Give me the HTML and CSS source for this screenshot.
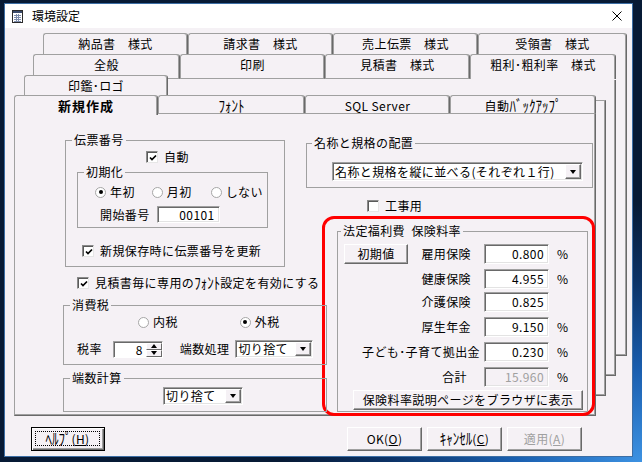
FILE: index.html
```html
<!DOCTYPE html>
<html lang="ja">
<head>
<meta charset="utf-8">
<title>環境設定</title>
<link rel="stylesheet" href="styles.css">
</head>
<body>
<div class="win">
  <div class="titlebar">
    <svg class="appicon" width="11" height="13" viewBox="0 0 11 13">
      <rect x="0.5" y="0.5" width="10" height="12" fill="#fff" stroke="#2b2b2b"/>
      <rect x="1" y="1" width="9" height="2" fill="#3a4a6b"/>
      <path d="M2 5.5h7M2 7.5h7M2 9.5h7M2 11.5h7M4.5 4v8M6.5 4v8" stroke="#7d8cab" stroke-width="1"/>
    </svg>
    <span class="title">環境設定</span>
    <svg class="close" width="10" height="10" viewBox="0 0 10 10"><path d="M0.5 0.5L9.5 9.5M9.5 0.5L0.5 9.5" stroke="#000" stroke-width="1"/></svg>
  </div>
  <div class="body">
    <div class="tabctl">
      <div class="back b1"></div>
      <div class="tabrow r1">
        <div class="tab t145">納品書　様式</div>
        <div class="tab t145">請求書　様式</div>
        <div class="tab t145">売上伝票　様式</div>
        <div class="tab t149">受領書　様式</div>
      </div>
      <div class="back b2"></div>
      <div class="tabrow r2">
        <div class="tab t147">全般</div>
        <div class="tab t145">印刷</div>
        <div class="tab t145">見積書　様式</div>
        <div class="tab t146 open">粗利･粗利率　様式</div>
      </div>
      <div class="back b3"></div>
      <div class="tabrow r3">
        <div class="tab t144">印鑑･ロゴ</div>
      </div>
      <div class="tabrow r4">
        <div class="tab t144 sel">新規作成</div>
        <div class="tab t147"><span class="hk">ﾌｫﾝﾄ</span></div>
        <div class="tab t145">SQL Server</div>
        <div class="tab t146">自動<span class="hk">ﾊﾞｯｸｱｯﾌﾟ</span></div>
      </div>
      <div class="panel">
        <div class="lcol">
          <div class="grp g-denpyo">
            <span class="cap">伝票番号</span>
            <div class="chk c-auto"><span class="cb"><svg width="8" height="8" viewBox="0 0 8 8"><path d="M1 3.5L3 5.5L7 1.5" fill="none" stroke="#000" stroke-width="1.7"/></svg></span>自動</div>
            <div class="grp g-init">
              <span class="cap">初期化</span>
              <div class="radios r-init">
                <div class="rad"><span class="rb on"></span>年初</div>
                <div class="rad"><span class="rb"></span>月初</div>
                <div class="rad"><span class="rb"></span>しない</div>
              </div>
              <div class="startno"><span>開始番号</span><div class="tb num start">00101</div></div>
            </div>
            <div class="chk c-save"><span class="cb"><svg width="8" height="8" viewBox="0 0 8 8"><path d="M1 3.5L3 5.5L7 1.5" fill="none" stroke="#000" stroke-width="1.7"/></svg></span>新規保存時に伝票番号を更新</div>
          </div>
          <div class="chk c-mitsu"><span class="cb"><svg width="8" height="8" viewBox="0 0 8 8"><path d="M1 3.5L3 5.5L7 1.5" fill="none" stroke="#000" stroke-width="1.7"/></svg></span>見積書毎に専用の<span class="hk">ﾌｫﾝﾄ</span>設定を有効にする</div>
          <div class="grp g-tax">
            <span class="cap">消費税</span>
            <div class="radios r-tax">
              <div class="rad"><span class="rb"></span>内税</div>
              <div class="rad"><span class="rb on"></span>外税</div>
            </div>
            <div class="taxrow">
              <span>税率</span>
              <div class="spin"><span class="val">8</span><span class="sbtns"><span class="sb"><i class="up"></i></span><span class="sb"><i class="dn"></i></span></span></div>
              <span class="hasu">端数処理</span>
              <div class="cmb c-hasu"><span class="val">切り捨て</span><span class="arr"><i class="dn"></i></span></div>
            </div>
          </div>
          <div class="grp g-round">
            <span class="cap">端数計算</span>
            <div class="cmb c-round"><span class="val">切り捨て</span><span class="arr"><i class="dn"></i></span></div>
          </div>
        </div>
        <div class="rcol">
          <div class="grp g-layout">
            <span class="cap">名称と規格の配置</span>
            <div class="cmb c-layout"><span class="val">名称と規格を縦に並べる(それぞれ１行)</span><span class="arr"><i class="dn"></i></span></div>
          </div>
          <div class="chk c-kouji"><span class="cb"></span>工事用</div>
          <div class="redbox">
            <div class="grp g-ins">
              <span class="cap">法定福利費&#8194;保険料率</span>
              <div class="irow"><div class="btn b-init">初期値</div><span class="lbl after">雇用保険</span><div class="tb num">0.800</div><span class="pct">%</span></div>
              <div class="irow"><span class="lbl">健康保険</span><div class="tb num">4.955</div><span class="pct">%</span></div>
              <div class="irow tight"><span class="lbl">介護保険</span><div class="tb num">0.825</div></div>
              <div class="irow"><span class="lbl">厚生年金</span><div class="tb num">9.150</div><span class="pct">%</span></div>
              <div class="irow"><span class="lbl long">子ども･子育て拠出金</span><div class="tb num">0.230</div><span class="pct">%</span></div>
              <div class="irow"><span class="lbl total">合計</span><div class="tb num dis">15.960</div><span class="pct">%</span></div>
              <div class="btn b-page">保険料率説明ページをブラウザに表示</div>
            </div>
          </div>
        </div>
      </div>
    </div>
    <div class="btnbar">
      <div class="btn help"><span class="focus"><span class="hk">ﾍﾙﾌﾟ</span>(<u>H</u>)</span></div>
      <div class="btn ok">OK(<u>O</u>)</div>
      <div class="btn next"><span class="hk">ｷｬﾝｾﾙ</span>(<u>C</u>)</div>
      <div class="btn next dis">適用(<u>A</u>)</div>
    </div>
  </div>
</div>
</body>
</html>
```

FILE: styles.css
```css
* { box-sizing: border-box; }
html, body { margin: 0; }
body {
  width: 642px;
  height: 462px;
  overflow: hidden;
  padding: 3px 0 0 4px;
  background: radial-gradient(ellipse 360px 260px at 100% 100%, #3d92e2 0%, #1a5fb0 35%, #0c3266 70%, #071a35 100%), #071a35;
  font-family: "Noto Sans CJK JP", "Noto Sans", sans-serif;
  font-size: 12px;
  line-height: 14px;
  letter-spacing: 0.4px;
  color: #000;
}

/* half-width katakana drawn taller, like the bitmap UI font */
.hk {
  display: inline-block;
  font-size: 13px;
  line-height: 14px;
  letter-spacing: 0;
  transform: scaleY(1.25);
}

.win {
  width: 629px;
  height: 454px;
  border: 1px solid #3c6ea5;
  background: #f5f1f5;
}

.titlebar {
  height: 24px;
  background: #fff;
  display: flex;
  align-items: center;
  padding-left: 7px;
}
.appicon { flex: none; }
.title { margin-left: 9px; letter-spacing: 0; }
.close { margin-left: auto; margin-right: 10px; }

.body { padding: 5px 0 0 9px; }

/* ---------- stacked tab control ---------- */
.tabctl {
  position: relative;
  width: 613px;
  padding-top: 80px;
}
.back {
  position: absolute;
  background: #f5f1f5;
  border-right: 1px solid #696969;
  border-bottom: 1px solid #696969;
  box-shadow: inset -1px -1px #a0a0a0;
}
.b1 { left: 29px; top: 21px; width: 584px; height: 302px; z-index: 1; }
.b2 { left: 19px; top: 47px; width: 583px; height: 296px; z-index: 3; }
.b3 { left: 10px; top: 67px; width: 582px; height: 296px; z-index: 5; border-top: 1px solid #a0a0a0; }

.tabrow { position: absolute; display: flex; }
.r1 { left: 29px; top: 0; z-index: 2; }
.r2 { left: 19px; top: 21px; z-index: 4; }
.r3 { left: 10px; top: 42px; z-index: 6; }
.r4 { left: 0; top: 62px; z-index: 8; }

.tab {
  flex: none;
  height: 21px;
  display: flex;
  align-items: center;
  justify-content: center;
  white-space: nowrap;
  background: #f5f1f5;
  border-top: 1px solid #a0a0a0;
  border-left: 1px solid #a0a0a0;
  border-right: 1px solid #696969;
  box-shadow: inset -1px 0 #a0a0a0;
  border-radius: 3px 3px 0 0;
}
.t144 { width: 144px; }
.t145 { width: 145px; }
.t146 { width: 146px; }
.t147 { width: 147px; }
.t149 { width: 149px; }
.r2 .tab { height: 25px; border-bottom: 1px solid #a0a0a0; padding-bottom: 4px; }
.r2 .tab.open { border-bottom: none; padding-bottom: 5px; }
.r3 .tab { height: 20px; }
.r4 .tab { height: 18px; padding-top: 2px; }
.r4 .tab.sel {
  height: 20px;
  padding-top: 0;
  font-weight: bold;
  font-size: 13px;
  letter-spacing: 1px;
}

.panel {
  position: relative;
  z-index: 7;
  width: 582px;
  height: 303px;
  background: #f5f1f5;
  border-top: 1px solid #a0a0a0;
  border-left: 1px solid #a0a0a0;
  border-right: 1px solid #696969;
  border-bottom: 1px solid #696969;
  box-shadow: inset -1px -1px #a0a0a0;
  display: flex;
  padding-left: 48px;
}

/* ---------- common controls ---------- */
.grp {
  position: relative;
  flex: none;
  border: 1px solid #a0a0a0;
}
.cap {
  position: absolute;
  top: -8px;
  left: 6px;
  padding: 0 2px;
  background: #f5f1f5;
  white-space: nowrap;
}
.chk {
  display: flex;
  align-items: center;
  height: 14px;
  white-space: nowrap;
  flex: none;
}
.cb {
  flex: none;
  width: 12px;
  height: 12px;
  margin-right: 6px;
  background: #fff;
  border: 1px solid;
  border-color: #8a8a8a #e6e6e6 #e6e6e6 #8a8a8a;
  box-shadow: inset 1px 1px #5a5a5a;
  display: flex;
  align-items: center;
  justify-content: center;
  padding: 1px 0 0 1px;
}
.radios { display: flex; height: 14px; }
.rad { display: flex; align-items: center; white-space: nowrap; }
.rb {
  flex: none;
  width: 11px;
  height: 11px;
  margin-right: 4px;
  border-radius: 50%;
  border: 1px solid #a6a6a6;
  background: #fff;
  display: flex;
  align-items: center;
  justify-content: center;
}
.rb.on::after {
  content: "";
  width: 4px;
  height: 4px;
  border-radius: 50%;
  background: #000;
}
.tb {
  flex: none;
  background: #fff;
  border: 1px solid;
  border-color: #a0a0a0 #fff #fff #a0a0a0;
  box-shadow: inset 1px 1px #696969, inset -1px -1px #e3e3e3;
  display: flex;
  align-items: center;
}
.num { justify-content: flex-end; padding-right: 4px; }
.tb.dis { background: #f5f1f5; color: #a0a0a0; }

.btn {
  flex: none;
  display: flex;
  align-items: center;
  justify-content: center;
  white-space: nowrap;
  background: #f5f1f5;
  border: 1px solid;
  border-color: #fff #696969 #696969 #fff;
  box-shadow: inset -1px -1px #a0a0a0;
}
.btn.dis { color: #a0a0a0; }

.cmb {
  flex: none;
  display: flex;
  align-items: center;
  background: #fff;
  border: 1px solid;
  border-color: #a0a0a0 #fff #fff #a0a0a0;
  box-shadow: inset 1px 1px #696969, inset -1px -1px #e3e3e3;
  padding: 1px;
  white-space: nowrap;
}
.cmb .val { flex: 1; padding-left: 1px; }
.arr {
  flex: none;
  width: 16px;
  align-self: stretch;
  display: flex;
  align-items: center;
  justify-content: center;
  background: #f5f1f5;
  border: 1px solid;
  border-color: #fff #696969 #696969 #fff;
  box-shadow: inset -1px -1px #a0a0a0;
}
i.dn, i.up {
  display: block;
  width: 0;
  height: 0;
  border-left: 3.5px solid transparent;
  border-right: 3.5px solid transparent;
}
i.dn { border-top: 4px solid #000; }
i.up { border-bottom: 4px solid #000; }

/* ---------- left column ---------- */
.lcol {
  flex: none;
  width: 243px;
  display: flex;
  flex-direction: column;
  align-items: flex-start;
}
.g-denpyo {
  margin: 26px 0 0 2px;
  width: 220px;
  height: 127px;
  padding-top: 9px;
  display: flex;
  flex-direction: column;
  align-items: flex-start;
}
.c-auto { margin-left: 80px; }
.g-init {
  margin: 8px 0 0 11px;
  width: 191px;
  height: 56px;
  padding-top: 12px;
}
.r-init { margin-left: 17px; }
.r-init .rad + .rad { margin-left: 17px; }
.r-init .rad:last-child { margin-left: 19px; }
.startno {
  display: flex;
  align-items: center;
  margin: 7px 0 0 22px;
  height: 17px;
}
.start { margin-left: 7px; width: 63px; height: 17px; }
.c-save { margin: 16px 0 0 16px; }
.c-mitsu { margin: 9px 0 0 14px; }

.g-tax {
  margin-top: 15px;
  width: 264px;
  height: 60px;
  padding-top: 9px;
}
.r-tax { margin-left: 74px; }
.r-tax .rad + .rad { margin-left: 62px; }
.taxrow {
  display: flex;
  align-items: center;
  height: 18px;
  margin: 11px 0 0 13px;
  white-space: nowrap;
}
.spin {
  flex: none;
  margin-left: 11px;
  width: 50px;
  height: 17px;
  display: flex;
  background: #fff;
  border: 1px solid;
  border-color: #a0a0a0 #fff #fff #a0a0a0;
  box-shadow: inset 1px 1px #696969;
  padding: 1px 0 0 1px;
}
.spin .val { flex: 1; text-align: right; padding-right: 3px; line-height: 14px; }
.sbtns { width: 16px; display: flex; flex-direction: column; }
.sb {
  flex: 1;
  display: flex;
  align-items: center;
  justify-content: center;
  background: #f5f1f5;
  border: 1px solid;
  border-color: #fff #696969 #696969 #fff;
}
.hasu { margin-left: 17px; }
.c-hasu { margin-left: 6px; width: 78px; height: 18px; }
.g-round {
  margin-top: 13px;
  width: 264px;
  height: 34px;
  padding: 8px 0 0 99px;
}
.c-round { width: 80px; height: 18px; }

/* ---------- right column ---------- */
.rcol {
  flex: none;
  width: 287px;
  display: flex;
  flex-direction: column;
  align-items: flex-start;
}
.g-layout {
  margin-top: 29px;
  width: 287px;
  height: 45px;
  padding: 18px 0 0 25px;
}
.g-layout .cap { left: 5px; }
.c-layout { width: 251px; height: 19px; }
.c-kouji { margin: 11px 0 0 61px; }
.redbox {
  flex: none;
  margin: 3px 0 0 16px;
  width: 273px;
  height: 200px;
  border: 3px solid #f00;
  border-radius: 12px;
  padding: 12px 0 0 12px;
}
.g-ins {
  width: 251px;
  height: 181px;
  padding: 12px 0 0 6px;
  display: flex;
  flex-direction: column;
  align-items: flex-start;
}
.g-ins .cap { left: 3px; }
.irow {
  flex: none;
  display: flex;
  align-items: center;
  height: 20px;
  white-space: nowrap;
}
.irow + .irow { margin-top: 5px; }
.irow.tight { margin-top: 3px; }
.lbl { flex: none; width: 127px; text-align: right; }
.lbl.after { width: 63px; }
.lbl.long { width: 136px; }
.lbl.total { width: 123px; margin-right: 4px; }
.irow .tb { margin-left: 13px; width: 65px; height: 20px; }
.lbl.long + .tb { margin-left: 4px; }
.pct { margin-left: 8px; }
.b-init { width: 64px; height: 20px; }
.b-page { margin: 3px 0 0 9px; width: 230px; height: 20px; }

/* ---------- dialog buttons ---------- */
.btnbar {
  display: flex;
  margin-top: 11px;
  height: 24px;
}
.btnbar .btn { width: 75px; height: 24px; }
.btnbar .help {
  margin-left: 17px;
  width: 74px;
  border: 1px solid #000;
  box-shadow: inset 1px 1px #fff, inset -1px -1px #696969, inset -2px -2px #a0a0a0;
  padding: 3px 4px 4px 3px;
}
.focus {
  flex: 1;
  align-self: stretch;
  display: flex;
  align-items: center;
  justify-content: center;
  border: 1px dotted #000;
}
.btnbar .ok { margin-left: 242px; }
.btnbar .next { margin-left: 5px; }
```
